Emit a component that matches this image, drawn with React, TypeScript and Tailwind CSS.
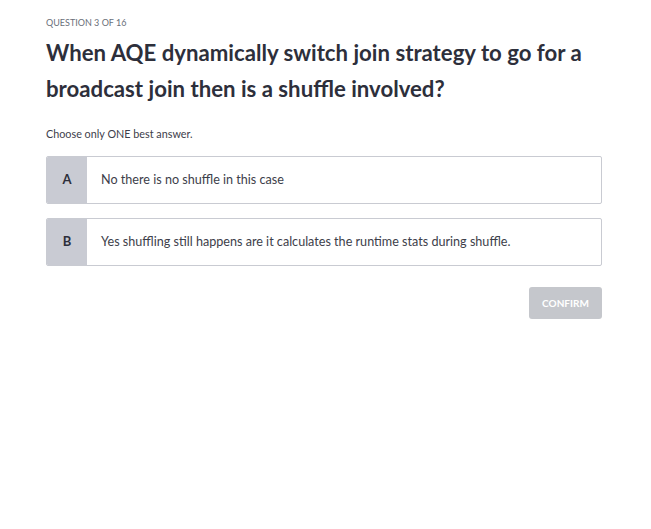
const options = [
  { letter: "A", text: "No there is no shuffle in this case" },
  { letter: "B", text: "Yes shuffling still happens are it calculates the runtime stats during shuffle." },
];

export default function App() {
  return (
    <div className="min-h-[529px] bg-white px-[46px] pt-[17px] font-['Lato','Open_Sans',sans-serif] text-[#2d2f3b]">
      <div className="text-[9px] leading-[12px] uppercase text-[#6a6f7a]">Question 3 of 16</div>
      <h1 className="mt-[6px] text-[22.2px] leading-[36px] font-bold text-[#2d2f3b] pr-[20px]">
        When AQE dynamically switch join strategy to go for a broadcast join then is a shuffle involved?
      </h1>
      <p className="mt-[20px] text-[10.8px] leading-[14px] text-[#3d404a]">Choose only ONE best answer.</p>
      <div className="mt-[15px] flex w-[556px] flex-col gap-[14px]">
        {options.map((o) => (
          <div key={o.letter} className="flex h-[48px] rounded-[2px] border border-[#c9cbd2] bg-white overflow-hidden">
            <div className="flex w-[40px] items-center justify-center bg-[#c9cbd3] text-[13px] font-bold text-[#2d2f3b]">
              {o.letter}
            </div>
            <div className="flex items-center pl-[14px] text-[12.6px] text-[#3d404a]">{o.text}</div>
          </div>
        ))}
      </div>
      <div className="mt-[21px] flex w-[556px] justify-end">
        <button className="h-[32px] w-[73px] rounded-[3px] bg-[#c5c7cc] text-[10px] font-bold uppercase text-white">
          Confirm
        </button>
      </div>
    </div>
  );
}
